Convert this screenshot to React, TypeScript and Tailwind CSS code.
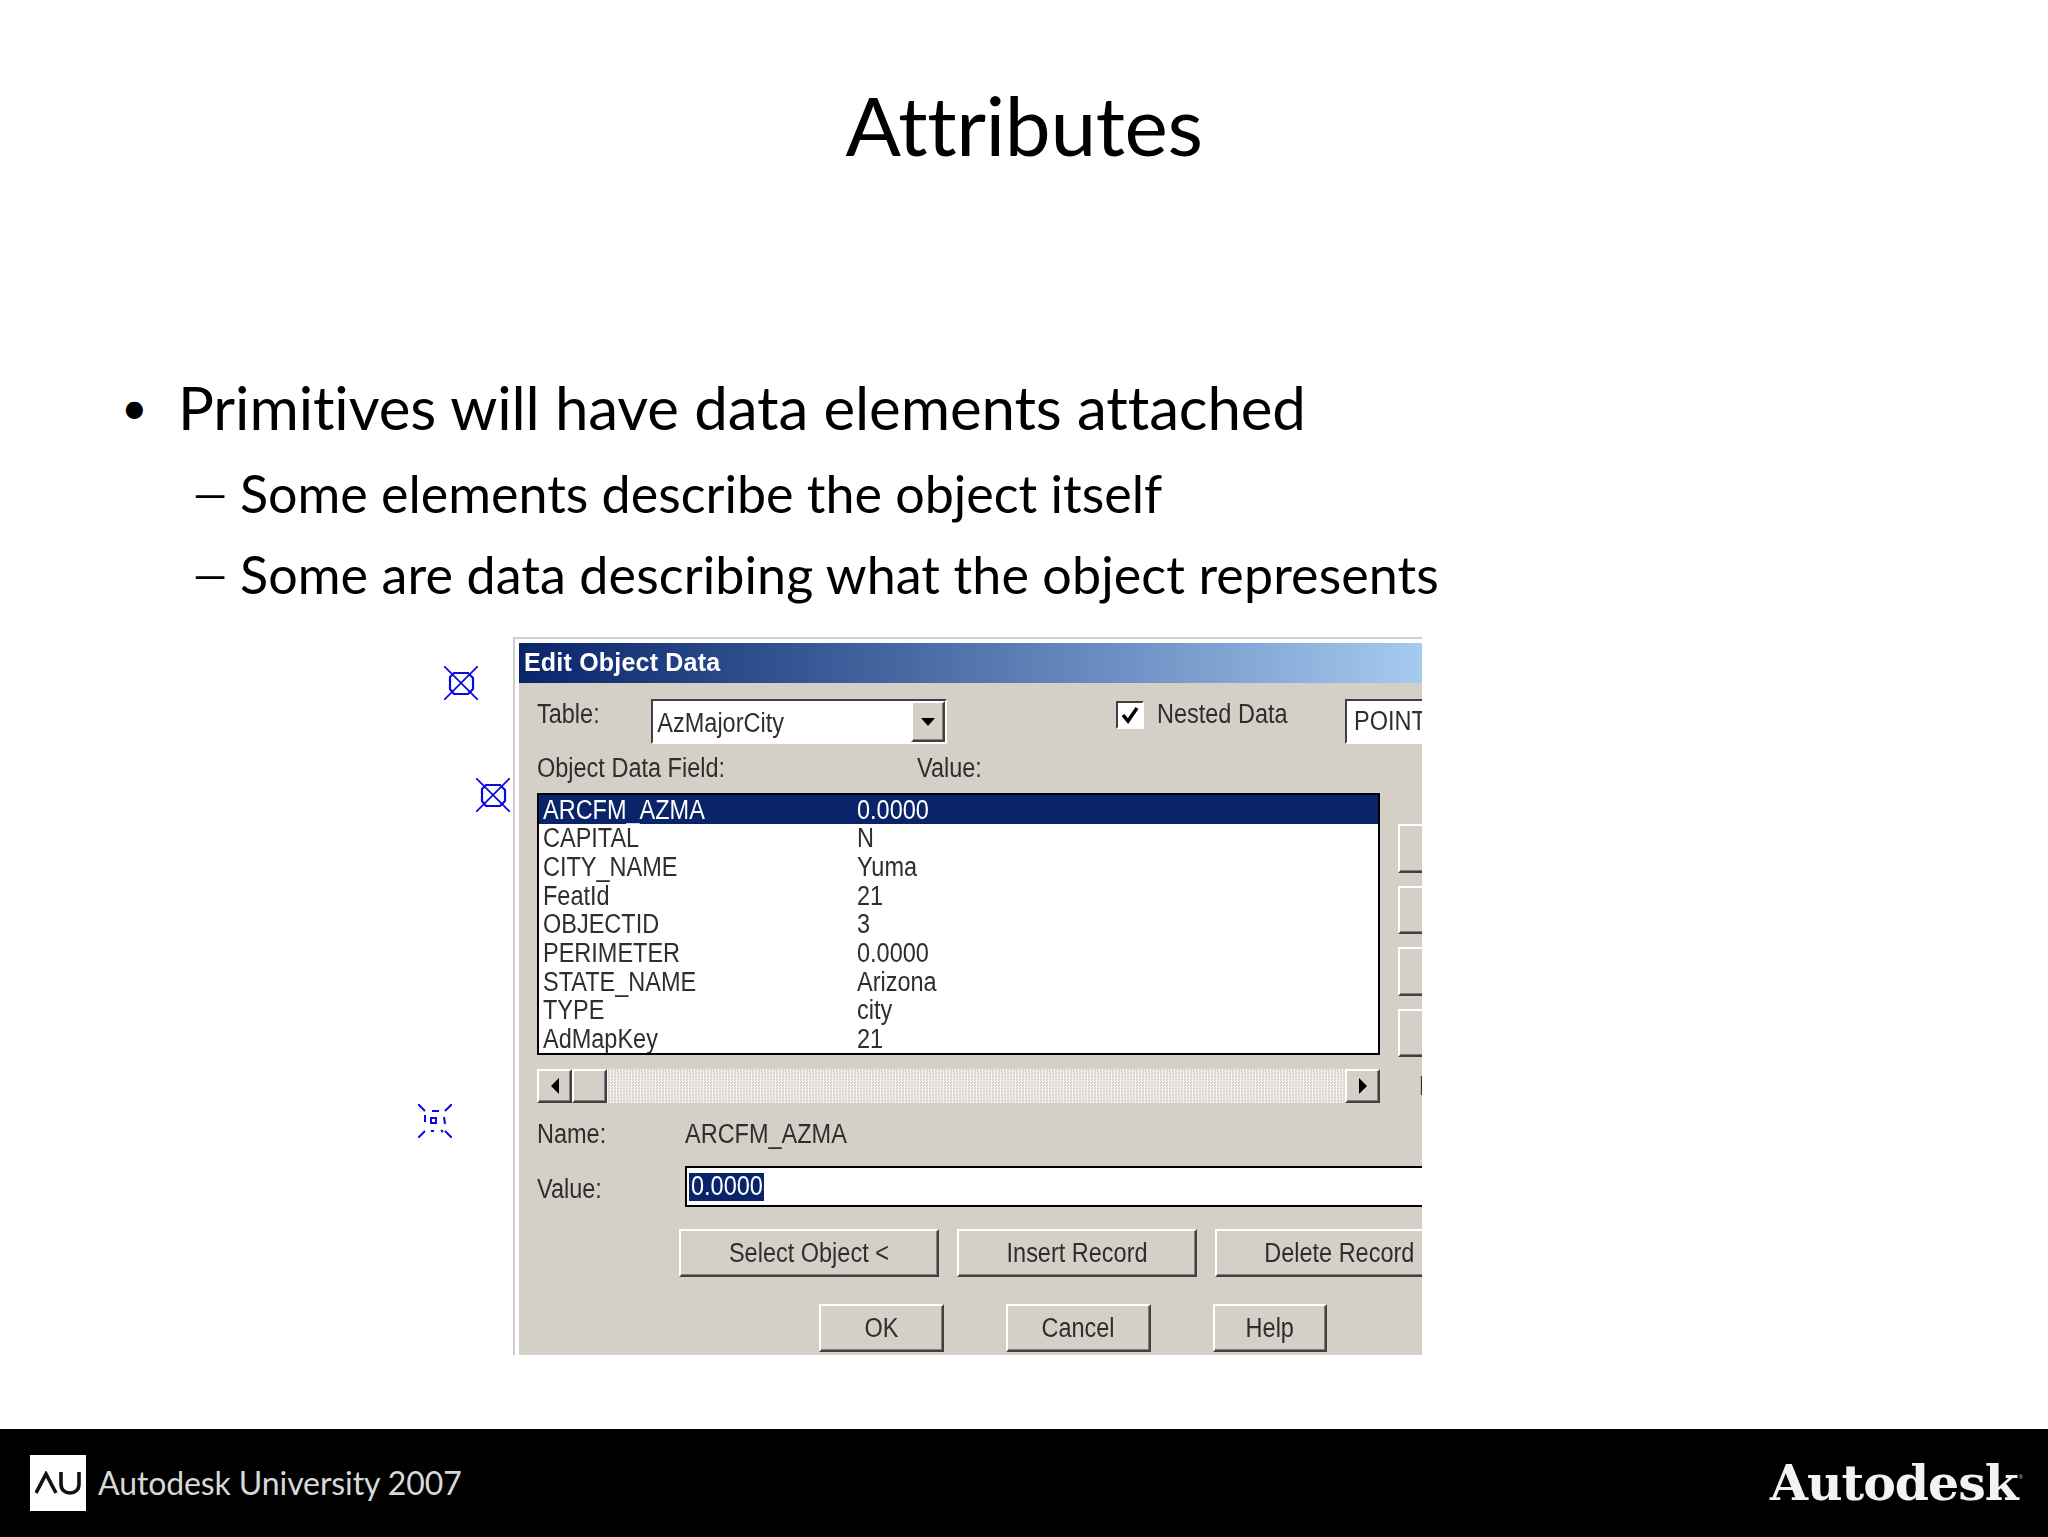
const LIST_ROWS = [
  { field: 'ARCFM_AZMA', value: '0.0000' },
  { field: 'CAPITAL', value: 'N' },
  { field: 'CITY_NAME', value: 'Yuma' },
  { field: 'FeatId', value: '21' },
  { field: 'OBJECTID', value: '3' },
  { field: 'PERIMETER', value: '0.0000' },
  { field: 'STATE_NAME', value: 'Arizona' },
  { field: 'TYPE', value: 'city' },
  { field: 'AdMapKey', value: '21' },
];

// the dialog is a stretched bitmap in the slide, so its text runs narrow
const dlgBase = "inline-block shrink-0 scale-x-[0.87] font-['Liberation_Sans',sans-serif] text-[27px] leading-none text-[#2e2e2e] whitespace-nowrap";
const dlgText = `${dlgBase} origin-left`;
const raised = 'bg-[#d4d0c8] border-2 border-t-white border-l-white border-r-[#404040] border-b-[#404040] shadow-[inset_-1px_-1px_0_#808080]';
const sunken = 'border-2 border-t-[#404040] border-l-[#404040] border-r-white border-b-white';

const Marker = ({ className, dashed }: { className: string; dashed?: boolean }) => (
  <svg viewBox="0 0 34 34" className={`absolute w-[34px] h-[34px] ${className}`} fill="none" stroke="#0808e8" strokeWidth="1.7">
    {dashed ? (
      <path
        strokeWidth="2"
        d="M0 0 7 7M34 0 27 7M0 34 7 27M34 34 27 27M14 7H21M7 11V18M26 13 27 20M13 14H18V19H13ZM13 27H16M23 26 25 28"
      />
    ) : (
      <>
        <path d="M0 0 34 34M34 0 0 34" />
        <path d="M10 7H24L29 12V23L24 28H10L6 23V11Z" strokeWidth="2.2" />
      </>
    )}
  </svg>
);

const DlgButton = ({ label, className }: { label: string; className: string }) => (
  <div className={`${raised} shrink-0 h-[48px] flex items-center justify-center ${className}`}>
    <span className={`${dlgBase} origin-center`}>{label}</span>
  </div>
);

const ScrollArrow = ({ left }: { left?: boolean }) => (
  <div className={`${raised} w-[35px] h-full shrink-0 flex items-center justify-center`}>
    <svg viewBox="0 0 8 16" className="w-2 h-4" fill="#000">
      <path d={left ? 'M8 0V16L0 8Z' : 'M0 0V16L8 8Z'} />
    </svg>
  </div>
);

const EditObjectDialog = () => (
  <div className="relative ml-[513px] mt-[32px] w-[909px]">
    <Marker className="left-[-69px] top-[29px]" />
    <Marker className="left-[-37px] top-[141px]" />
    <Marker className="left-[-95px] top-[467px]" dashed />

    <div className="h-[718px] overflow-hidden bg-white border-l-2 border-t-2 border-[#cfcfcf] pl-1 pt-1 blur-[0.7px]">
      <div className="h-[712px] w-[903px] overflow-hidden bg-[#d4d0c8] flex flex-col">
        {/* Title bar */}
        <div className="h-10 shrink-0 flex items-center pl-[5px] bg-gradient-to-r from-[#0a246a] to-[#a6caf0]">
          <span className="font-['Liberation_Sans',sans-serif] font-bold text-[25px] tracking-[0.2px] text-white">Edit Object Data</span>
        </div>

        {/* Table row */}
        <div className="mt-4 h-[45px] shrink-0 flex items-start pl-[18px]">
          <span className={`${dlgText} w-[114px] mt-[2px]`}>Table:</span>
          <div className={`${sunken} w-[296px] h-[45px] shrink-0 bg-white flex items-center justify-between`}>
            <span className={`${dlgText} pl-[5px] pt-1`}>AzMajorCity</span>
            <div className={`${raised} w-[34px] h-full flex items-center justify-center`}>
              <svg viewBox="0 0 14 8" className="w-[14px] h-2" fill="#000">
                <path d="M0 0H14L7 8Z" />
              </svg>
            </div>
          </div>
          <div className={`${sunken} ml-[169px] mt-[2px] w-7 h-7 shrink-0 bg-white flex items-center justify-center`}>
            <svg viewBox="0 0 20 20" className="w-5 h-5" fill="none" stroke="#000" strokeWidth="3.5">
              <path d="M3 10 8 16 17 3" />
            </svg>
          </div>
          <span className={`${dlgText} ml-[13px] w-[188px] mt-[2px]`}>Nested Data</span>
          <div className={`${sunken} w-[90px] h-[45px] shrink-0 bg-white flex items-center pl-[7px]`}>
            <span className={dlgText}>POINT</span>
          </div>
        </div>

        {/* Column captions */}
        <div className="h-[49px] shrink-0 flex items-center pl-[18px]">
          <span className={`${dlgText} w-[380px]`}>Object Data Field:</span>
          <span className={dlgText}>Value:</span>
        </div>

        {/* Field list and the clipped side buttons */}
        <div className="h-[264px] shrink-0 flex items-start pl-[18px]">
          <div className="w-[843px] h-[262px] shrink-0 border-2 border-black bg-white overflow-hidden">
            {LIST_ROWS.map((row, i) => (
              <div key={row.field} className={`h-[28.67px] flex items-center pl-1 pt-[2px] ${i === 0 ? 'bg-[#0a246a]' : ''}`}>
                <span className={`${dlgText} w-[314px] ${i === 0 ? 'text-white' : ''}`}>{row.field}</span>
                <span className={`${dlgText} ${i === 0 ? 'text-white' : ''}`}>{row.value}</span>
              </div>
            ))}
          </div>
          <div className="ml-[18px] mt-[31px] flex flex-col gap-[13px] shrink-0">
            <div className={`${raised} w-10 h-[49px]`} />
            <div className={`${raised} w-10 h-[48px]`} />
            <div className={`${raised} w-10 h-[49px]`} />
            <div className={`${raised} w-10 h-[48px]`} />
          </div>
        </div>

        {/* Horizontal scrollbar */}
        <div className="mt-3 h-[34px] shrink-0 flex items-center pl-[18px]">
          <div className="w-[843px] h-full shrink-0 flex bg-[repeating-conic-gradient(#f4f3f0_0_25%,#d4d0c8_0_50%)] bg-[length:3px_3px]">
            <ScrollArrow left />
            <div className={`${raised} w-[35px] h-full shrink-0`} />
            <div className="flex-1" />
            <ScrollArrow />
          </div>
          <span className={`${dlgText} ml-[39px]`}>F</span>
        </div>

        {/* Name */}
        <div className="h-[63px] shrink-0 flex items-center pl-[18px]">
          <span className={`${dlgText} w-[148px]`}>Name:</span>
          <span className={dlgText}>ARCFM_AZMA</span>
        </div>

        {/* Value */}
        <div className="h-[41px] shrink-0 flex items-center pl-[18px]">
          <span className={`${dlgText} w-[148px] pt-[5px]`}>Value:</span>
          <div className="w-[760px] h-[41px] shrink-0 border-2 border-black bg-white flex items-center pl-[2px]">
            <div className="bg-[#0a246a] h-7 flex items-center w-[75px] pl-[2px]">
              <span className={`${dlgText} text-white`}>0.0000</span>
            </div>
          </div>
        </div>

        {/* Record buttons */}
        <div className="mt-[22px] shrink-0 flex gap-[18px] pl-40">
          <DlgButton label="Select Object <" className="w-[260px]" />
          <DlgButton label="Insert Record" className="w-[240px]" />
          <DlgButton label="Delete Record" className="w-[248px]" />
        </div>

        {/* Dialog buttons */}
        <div className="mt-[27px] shrink-0 flex gap-[62px] pl-[300px]">
          <DlgButton label="OK" className="w-[125px]" />
          <DlgButton label="Cancel" className="w-[145px]" />
          <DlgButton label="Help" className="w-[114px]" />
        </div>
      </div>
    </div>
  </div>
);

export default function App() {
  return (
    <div className="w-[2048px] h-[1537px] overflow-hidden bg-white flex flex-col font-['Lato',sans-serif] [font-variant-ligatures:none] text-black">
      <header className="h-[248px] shrink-0 flex items-center justify-center">
        <h1 className="text-[82px] leading-none tracking-[-0.4px]">Attributes</h1>
      </header>

      <ul className="mt-[119px] shrink-0">
        <li className="h-20 flex items-center pl-[121px] text-[60px] tracking-[-0.1px]">
          <span className="w-[57px] shrink-0 text-[46px] leading-none">•</span>
          <span>Primitives will have data elements attached</span>
        </li>
        <li className="mt-[15px] h-[62px] flex items-center pl-[193px] text-[52px]">
          <span className="w-[47px] shrink-0 text-[43px]">—</span>
          <span>Some elements describe the object itself</span>
        </li>
        <li className="mt-[19px] h-[62px] flex items-center pl-[193px] text-[52px] tracking-[0.1px]">
          <span className="w-[47px] shrink-0 text-[43px]">—</span>
          <span>Some are data describing what the object represents</span>
        </li>
      </ul>

      <EditObjectDialog />

      <footer className="mt-auto h-[108px] shrink-0 bg-black flex items-center justify-between pl-[30px] pr-[25px]">
        <div className="flex items-center gap-3">
          <div className="w-14 h-14 bg-white flex items-center justify-center">
            <svg viewBox="0 0 46 24" className="w-[46px] h-6" fill="none" stroke="#111" strokeWidth="3.6">
              <path d="M1 22 11 3 21 22" />
              <path d="M26 1V13C26 19 30 22 35 22C40 22 44 19 44 13V1" />
            </svg>
          </div>
          <span className="text-[32px] tracking-[-0.1px] text-[#d8d8d8]">Autodesk University 2007</span>
        </div>
        <div className="flex items-start">
          <span className="font-['DejaVu_Serif',serif] font-bold text-[49px] leading-none tracking-[-1px] text-[#f2f2f2]">Autodesk</span>
          <span className="mt-[16px] ml-[1px] text-[5px] leading-none text-[#bbbbbb]">®</span>
        </div>
      </footer>
    </div>
  );
}
